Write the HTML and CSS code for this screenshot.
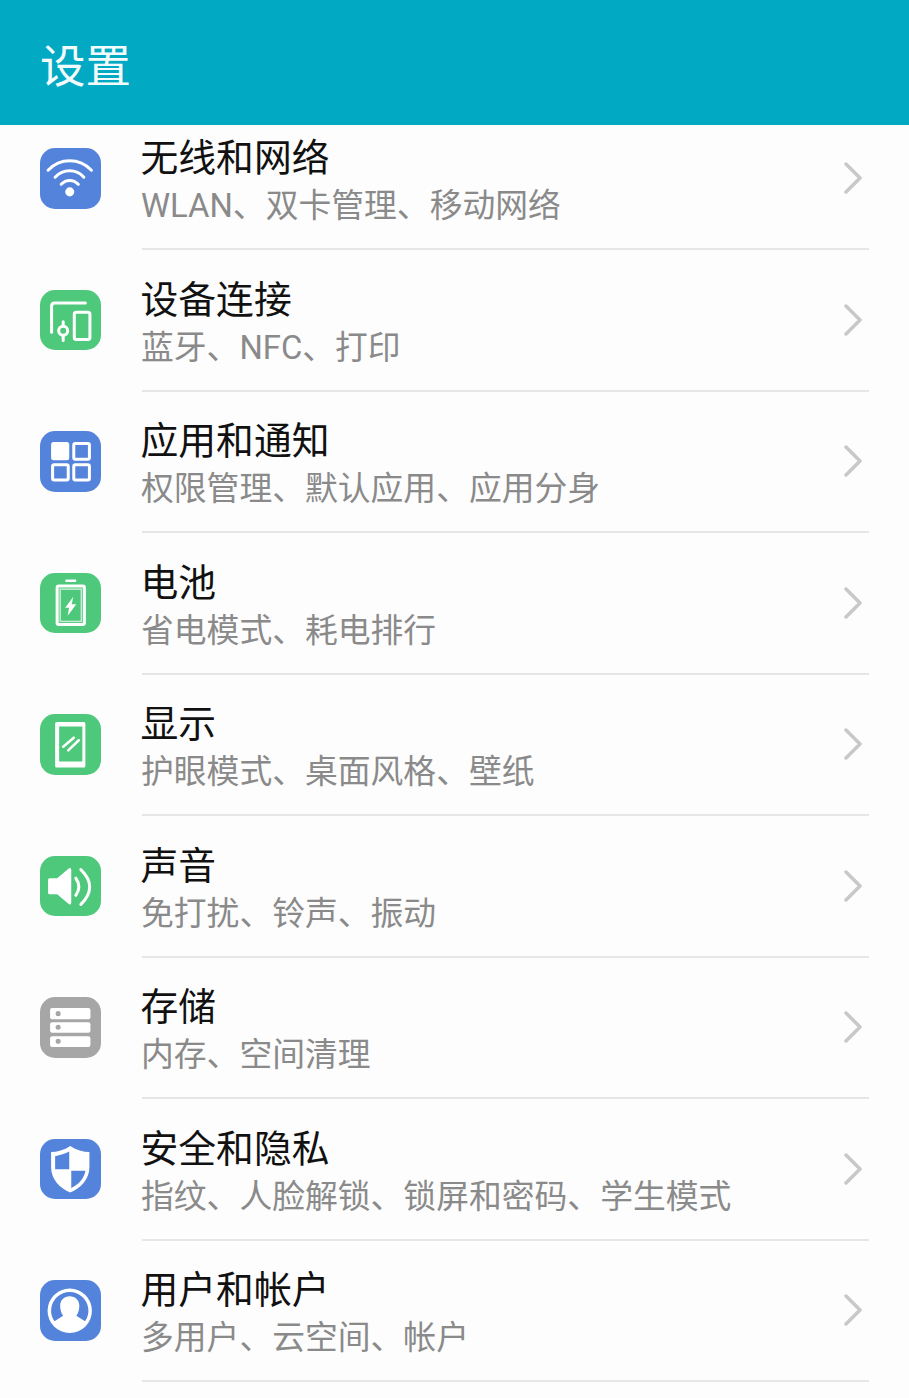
FILE: index.html
```html
<!DOCTYPE html>
<html lang="zh-CN">
<head>
    <meta charset="UTF-8">
    <meta name="viewport" content="width=device-width, initial-scale=1.0">
    <title>设置</title>
    <link rel="stylesheet" href="styles.css">
</head>
<body>
    <header class="app-bar"><h1>设置</h1></header>

    <main class="list-view">
        <ul class="settings-list">
            <li class="row">
                <svg class="icon blue" viewBox="0 0 60 60">
                    <path class="line" d="M8 22C20 9.500 39 9.500 51 22M15 29C23 20.500 36 20.500 43.500 29M21 36C26 31 33 31 38 36"/>
                    <circle class="fill" cx="29.500" cy="43.500" r="4.500"/>
                </svg>
                <div class="row-body">
                    <div class="row-text"><div class="title">无线和网络</div><div class="sub">WLAN、双卡管理、移动网络</div></div>
                    <svg class="chevron" viewBox="0 0 20 32"><path d="M3 2L17 16L3 30"/></svg>
                </div>
            </li>
            <li class="row">
                <svg class="icon green" viewBox="0 0 60 60">
                    <path class="line" d="M11.500 42V16Q11.500 13 14.500 13H45"/>
                    <rect class="line" x="34" y="22" width="15.500" height="27" rx="2"/>
                    <circle class="line" cx="23" cy="40.500" r="4.500"/>
                    <path class="line" d="M23 31.500V35M23 46V50"/>
                </svg>
                <div class="row-body">
                    <div class="row-text"><div class="title">设备连接</div><div class="sub">蓝牙、NFC、打印</div></div>
                    <svg class="chevron" viewBox="0 0 20 32"><path d="M3 2L17 16L3 30"/></svg>
                </div>
            </li>
            <li class="row">
                <svg class="icon blue" viewBox="0 0 60 60">
                    <rect class="fill" x="11" y="11" width="18" height="18" rx="2.500"/>
                    <rect class="line" x="33.500" y="12.500" width="15.500" height="15.500" rx="1.500"/>
                    <rect class="line" x="12.500" y="33.500" width="15.500" height="15" rx="1.500"/>
                    <rect class="line" x="33.500" y="33.500" width="15.500" height="15" rx="1.500"/>
                </svg>
                <div class="row-body">
                    <div class="row-text"><div class="title">应用和通知</div><div class="sub">权限管理、默认应用、应用分身</div></div>
                    <svg class="chevron" viewBox="0 0 20 32"><path d="M3 2L17 16L3 30"/></svg>
                </div>
            </li>
            <li class="row">
                <svg class="icon green" viewBox="0 0 60 60">
                    <rect class="fill" x="25" y="6.500" width="11" height="2.500" rx="1"/>
                    <rect class="line" x="17" y="13" width="27" height="38" rx="1.500"/>
                    <rect class="thin" x="20" y="16" width="21" height="32"/>
                    <path class="fill" d="M33 23.500L25 34.500H28.800L27.500 42.500L36 31H31.500Z"/>
                </svg>
                <div class="row-body">
                    <div class="row-text"><div class="title">电池</div><div class="sub">省电模式、耗电排行</div></div>
                    <svg class="chevron" viewBox="0 0 20 32"><path d="M3 2L17 16L3 30"/></svg>
                </div>
            </li>
            <li class="row">
                <svg class="icon green" viewBox="0 0 60 60">
                    <path class="fill" fill-rule="evenodd" d="M16.500 8H43.500Q45 8 45 9.500V51.500Q45 53 43.500 53H16.500Q15 53 15 51.500V9.500Q15 8 16.500 8ZM19 12.500V47H42V12.500Z"/>
                    <path class="line slim" d="M23 32.500L33.500 23.500M28 36L38.500 26"/>
                </svg>
                <div class="row-body">
                    <div class="row-text"><div class="title">显示</div><div class="sub">护眼模式、桌面风格、壁纸</div></div>
                    <svg class="chevron" viewBox="0 0 20 32"><path d="M3 2L17 16L3 30"/></svg>
                </div>
            </li>
            <li class="row">
                <svg class="icon green" viewBox="0 0 60 60">
                    <path class="fill" d="M8 23.500Q8 22 9.500 22H17L28.500 12.500Q31 11 31 14V46Q31 49 28.500 47.500L17 38H9.500Q8 38 8 36.500Z"/>
                    <path class="line" d="M35.500 22Q41.500 30.500 35.500 39M40.500 13.500Q58 30.500 40.500 48"/>
                </svg>
                <div class="row-body">
                    <div class="row-text"><div class="title">声音</div><div class="sub">免打扰、铃声、振动</div></div>
                    <svg class="chevron" viewBox="0 0 20 32"><path d="M3 2L17 16L3 30"/></svg>
                </div>
            </li>
            <li class="row">
                <svg class="icon gray" viewBox="0 0 60 60">
                    <rect class="fill" x="10" y="11" width="40" height="11" rx="2"/>
                    <rect class="fill" x="10" y="25" width="40" height="10.500" rx="2"/>
                    <rect class="fill" x="10" y="39" width="40" height="10.500" rx="2"/>
                    <circle class="dot" cx="18" cy="16.500" r="2.500"/>
                    <circle class="dot" cx="18" cy="30" r="2.500"/>
                    <circle class="dot" cx="18" cy="44" r="2.500"/>
                </svg>
                <div class="row-body">
                    <div class="row-text"><div class="title">存储</div><div class="sub">内存、空间清理</div></div>
                    <svg class="chevron" viewBox="0 0 20 32"><path d="M3 2L17 16L3 30"/></svg>
                </div>
            </li>
            <li class="row">
                <svg class="icon blue" viewBox="0 0 60 60">
                    <path class="fill" d="M30 7C24 11 17 13 11 13V28C11 40 20 49 30 53C40 49 49 40 49 28V13C43 13 36 11 30 7Z"/>
                    <path class="cut" d="M29 12.500C25 14.500 20 16 15 17V30H29ZM31 31.500H45C44 39 38.500 45 31 48.500Z"/>
                </svg>
                <div class="row-body">
                    <div class="row-text"><div class="title">安全和隐私</div><div class="sub">指纹、人脸解锁、锁屏和密码、学生模式</div></div>
                    <svg class="chevron" viewBox="0 0 20 32"><path d="M3 2L17 16L3 30"/></svg>
                </div>
            </li>
            <li class="row">
                <svg class="icon blue" viewBox="0 0 60 60">
                    <circle class="fill" cx="29.500" cy="30.500" r="22"/>
                    <path class="cut" d="M14.300 41A18.500 18.500 0 1 1 44.700 41L36 35.500C38 33 39 29 39 25.500C39 20 35 16 29.500 16C24 16 20 20 20 25.500C20 29 21 33 23 35.500Z"/>
                </svg>
                <div class="row-body">
                    <div class="row-text"><div class="title">用户和帐户</div><div class="sub">多用户、云空间、帐户</div></div>
                    <svg class="chevron" viewBox="0 0 20 32"><path d="M3 2L17 16L3 30"/></svg>
                </div>
            </li>
        </ul>
    </main>
</body>
</html>
```

FILE: styles.css
```css
html, body {
    height: 100%;
}
body {
    margin: 0;
    display: flex;
    flex-direction: column;
    overflow: hidden;
    background-color: #fdfdfd;
    font-family: Roboto, "Noto Sans CJK SC", sans-serif;
}
.app-bar {
    flex: none;
    height: 125px;
    display: flex;
    align-items: center;
    padding-left: 40px;
    background-color: #01a9c2;
}
.app-bar h1 {
    margin: 0;
    font-size: 45.5px;
    font-weight: 400;
    color: #f4fbfc;
}
.list-view {
    flex: 1;
    overflow: hidden;
}
.settings-list {
    list-style: none;
    margin: -16.5px 0 0 0;
    padding: 0;
}
.row {
    height: 141.5px;
    display: flex;
    align-items: center;
    padding: 0 40px 0 40px;
}
.row-body {
    flex: 1;
    height: 100%;
    box-sizing: border-box;
    margin-left: 41px;
    padding-right: 6px;
    display: flex;
    align-items: center;
    justify-content: space-between;
    border-bottom: 2px solid #e6e6e6;
}
.row-text {
    padding-top: 8px;
}
.title {
    font-size: 37.8px;
    line-height: 48px;
    margin-left: -1px;
    color: #111;
}
.sub {
    font-size: 32.8px;
    line-height: 48px;
    margin-left: -0.5px;
    color: #8a8a8a;
}
.chevron {
    width: 20px;
    height: 32px;
}
.chevron path {
    fill: none;
    stroke: #c8c8c8;
    stroke-width: 3.5;
    stroke-linecap: round;
    stroke-linejoin: round;
}
.icon {
    flex: none;
    width: 60.5px;
    height: 60.5px;
    margin-bottom: 2px;
    border-radius: 15px;
}
.icon.blue { background-color: #5483db; }
.icon.green { background-color: #4ec87a; }
.icon.gray { background-color: #a6a6a6; }
.icon .fill { fill: #fff; }
.icon .dot { fill: #a6a6a6; }
.icon .line {
    fill: none;
    stroke: #fff;
    stroke-width: 3;
    stroke-linecap: round;
}
.icon .slim { stroke-width: 2.5; }
.icon .thin {
    fill: none;
    stroke: #c4edd3;
    stroke-width: 1.5;
}
.icon .cut { fill: #5483db; }
```
